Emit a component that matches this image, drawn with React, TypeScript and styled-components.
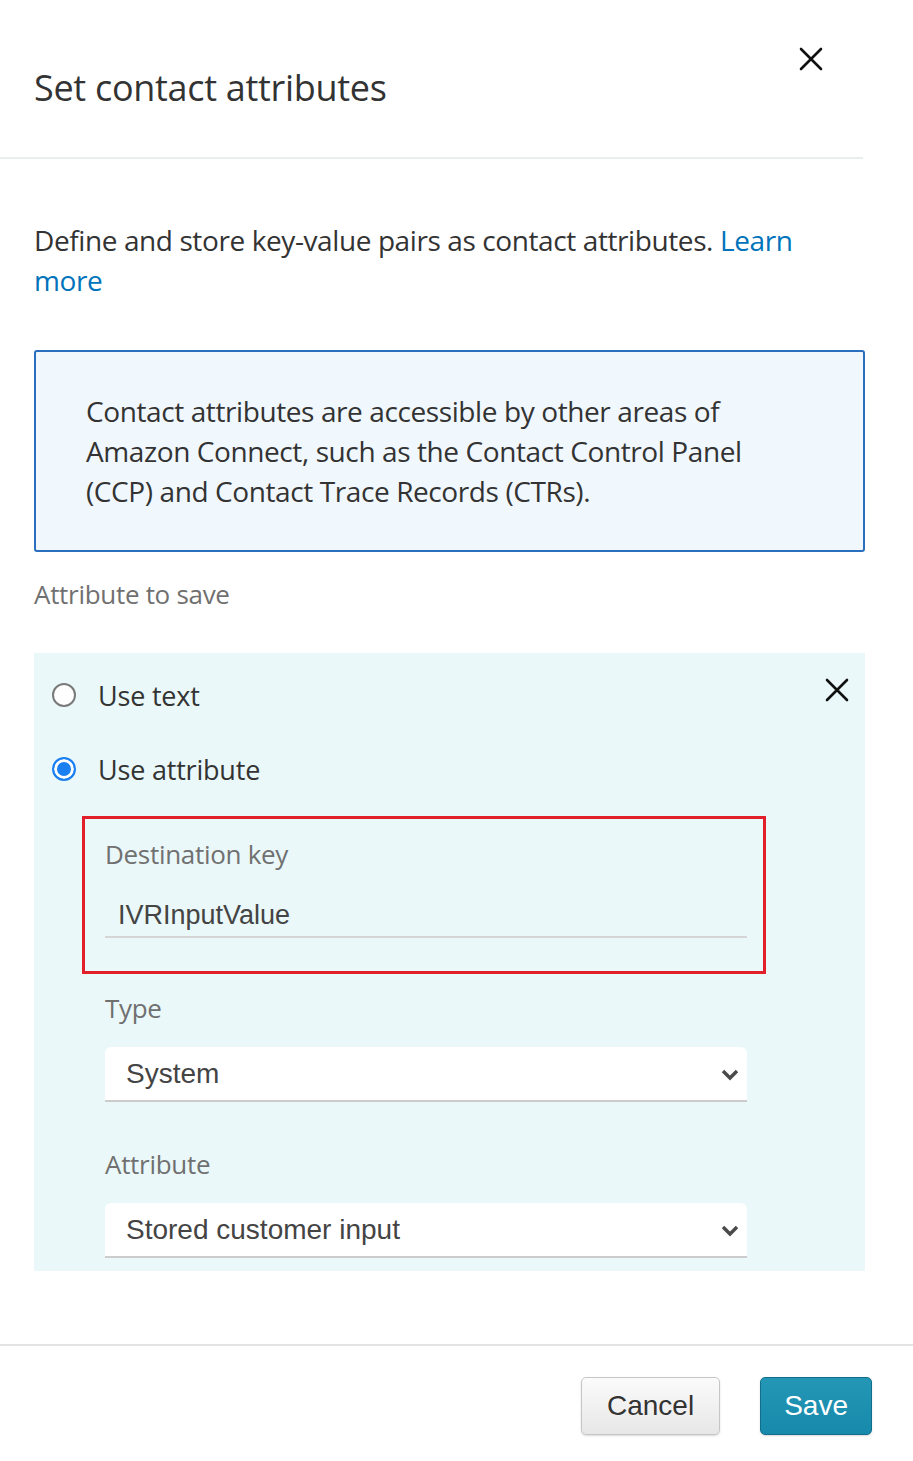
import * as React from "react";
import styled, { createGlobalStyle } from "styled-components";

const GlobalStyle = createGlobalStyle`
  html, body {
    margin: 0;
    padding: 0;
    background: #fff;
  }
  body {
    font-family: "Open Sans", "Noto Sans", sans-serif;
    color: #333;
  }
`;

const Page = styled.div`
  width: 913px;
  min-height: 1461px;
  display: flex;
  flex-direction: column;
`;

const Main = styled.div`
  width: 863px;
`;

const Header = styled.header`
  height: 157px;
  border-bottom: 2px solid #eaeded;
  display: flex;
  justify-content: space-between;
  align-items: flex-start;
  padding: 0 40px 0 34px;
`;

const Title = styled.h2`
  margin: 68px 0 0;
  font-size: 36px;
  font-weight: 400;
  line-height: 40px;
  letter-spacing: -0.3px;
  color: #333;
`;

const IconButton = styled.button<{ $top?: number }>`
  border: 0;
  background: none;
  padding: 0;
  margin-top: ${(p) => p.$top ?? 0}px;
  width: 24px;
  height: 24px;
  display: flex;
  cursor: pointer;
`;

const Body = styled.div`
  padding: 61px 0 0 34px;
  margin-right: -2px;
`;

const Description = styled.p`
  margin: 0;
  font-size: 28px;
  line-height: 40px;
  letter-spacing: -0.4px;
  padding-right: 62px;
`;

const Link = styled.a`
  color: #0073bb;
  text-decoration: none;
`;

const InfoBox = styled.div`
  margin-top: 50px;
  border: 2px solid #2a6fbd;
  border-radius: 3px;
  background: #f0f7fd;
  padding: 39px 62px 39px 50px;
  font-size: 28px;
  line-height: 40px;
  letter-spacing: -0.4px;
  color: #333;
`;

const FieldLabel = styled.div`
  font-size: 26px;
  line-height: 32px;
  letter-spacing: -0.3px;
  color: #707070;
`;

const SectionLabel = styled(FieldLabel)`
  margin-top: 26px;
`;

const Panel = styled.div`
  margin-top: 43px;
  background: #eaf8f9;
  padding: 22px 16px 13px 18px;
`;

const RadioRow = styled.div`
  display: flex;
  align-items: center;
  height: 40px;
  gap: 22px;
  & + & {
    margin-top: 34px;
  }
`;

const Radio = styled.span<{ $checked?: boolean }>`
  width: 24px;
  height: 24px;
  box-sizing: border-box;
  border-radius: 50%;
  border: 2px solid ${(p) => (p.$checked ? "#1a7ff0" : "#7a7a7a")};
  background: ${(p) => (p.$checked ? "#1a7ff0" : "#fff")};
  box-shadow: ${(p) => (p.$checked ? "inset 0 0 0 3px #fff" : "none")};
  flex-shrink: 0;
`;

const RadioLabel = styled.span`
  flex: 1;
  font-size: 27px;
  letter-spacing: -0.2px;
  color: #333;
`;

const Fields = styled.div`
  margin-top: 27px;
  padding-left: 30px;
`;

const Highlight = styled.div`
  width: 684px;
  box-sizing: border-box;
  border: 3px solid #e2202a;
  padding: 19px 16px 33px 20px;
`;

const Field = styled.div<{ $gap: number }>`
  display: flex;
  flex-direction: column;
  gap: ${(p) => p.$gap}px;
`;

const PlainField = styled(Field)`
  width: 642px;
  margin-left: 23px;
  margin-top: 18px;
  & + & {
    margin-top: 46px;
  }
`;

const TextInput = styled.div`
  height: 46px;
  box-sizing: border-box;
  border-bottom: 2px solid #d5d5d5;
  padding: 2px 0 0 13px;
  display: flex;
  align-items: center;
  font-family: "Liberation Sans", Arial, sans-serif;
  font-size: 27px;
  color: #444;
`;

const Select = styled.div`
  height: 55px;
  box-sizing: border-box;
  background: #fff;
  border-radius: 6px 6px 0 0;
  border-bottom: 2px solid #cccccc;
  padding: 0 7px 0 21px;
  display: flex;
  align-items: center;
  justify-content: space-between;
  font-family: "Liberation Sans", Arial, sans-serif;
  font-size: 28px;
  color: #444;
`;

const Footer = styled.footer`
  margin-top: 73px;
  border-top: 2px solid #e3e3e3;
  padding: 31px 41px 0 0;
  display: flex;
  justify-content: flex-end;
  gap: 40px;
`;

const Button = styled.button<{ $primary?: boolean }>`
  height: 58px;
  box-sizing: border-box;
  padding: 0 ${(p) => (p.$primary ? 23 : 25)}px;
  border-radius: 5px;
  font-family: "Liberation Sans", Arial, sans-serif;
  font-size: 28px;
  cursor: pointer;
  border: 1px solid ${(p) => (p.$primary ? "#116f8c" : "#c6c6c6")};
  background: ${(p) =>
    p.$primary
      ? "linear-gradient(#2496b6, #1789aa)"
      : "linear-gradient(#fbfbfb, #e7e7e7)"};
  color: ${(p) => (p.$primary ? "#fff" : "#333")};
  box-shadow: 0 1px 2px rgba(0, 0, 0, 0.15);
`;

const CloseIcon = ({ size = 24 }: { size?: number }) => (
  <svg width={size} height={size} viewBox="0 0 24 24">
    <path
      d="M2 2 L22 22 M22 2 L2 22"
      stroke="#111"
      strokeWidth="2.6"
      strokeLinecap="round"
    />
  </svg>
);

const Chevron = () => (
  <svg width="20" height="14" viewBox="0 0 20 14">
    <path
      d="M3 4 L10 11 L17 4"
      stroke="#4a4a4a"
      strokeWidth="3.4"
      fill="none"
      strokeLinejoin="miter"
    />
  </svg>
);

export default function App() {
  return (
    <Page>
      <GlobalStyle />
      <Main>
        <Header>
          <Title>Set contact attributes</Title>
          <IconButton $top={47} aria-label="Close">
            <CloseIcon />
          </IconButton>
        </Header>
        <Body>
          <Description>
            Define and store key-value pairs as contact attributes.{" "}
            <Link href="#">Learn</Link> <Link href="#">more</Link>
          </Description>
          <InfoBox>
            Contact attributes are accessible by other areas of Amazon Connect,
            such as the Contact Control Panel (CCP) and Contact Trace Records
            (CTRs).
          </InfoBox>
          <SectionLabel>Attribute to save</SectionLabel>
          <Panel>
            <RadioRow>
              <Radio />
              <RadioLabel>Use text</RadioLabel>
              <IconButton $top={-10} aria-label="Remove">
                <CloseIcon />
              </IconButton>
            </RadioRow>
            <RadioRow>
              <Radio $checked />
              <RadioLabel>Use attribute</RadioLabel>
            </RadioRow>
            <Fields>
              <Highlight>
                <Field $gap={22}>
                  <FieldLabel>Destination key</FieldLabel>
                  <TextInput>IVRInputValue</TextInput>
                </Field>
              </Highlight>
              <PlainField $gap={23}>
                <FieldLabel>Type</FieldLabel>
                <Select>
                  System
                  <Chevron />
                </Select>
              </PlainField>
              <PlainField $gap={23}>
                <FieldLabel>Attribute</FieldLabel>
                <Select>
                  Stored customer input
                  <Chevron />
                </Select>
              </PlainField>
            </Fields>
          </Panel>
        </Body>
      </Main>
      <Footer>
        <Button>Cancel</Button>
        <Button $primary>Save</Button>
      </Footer>
    </Page>
  );
}
